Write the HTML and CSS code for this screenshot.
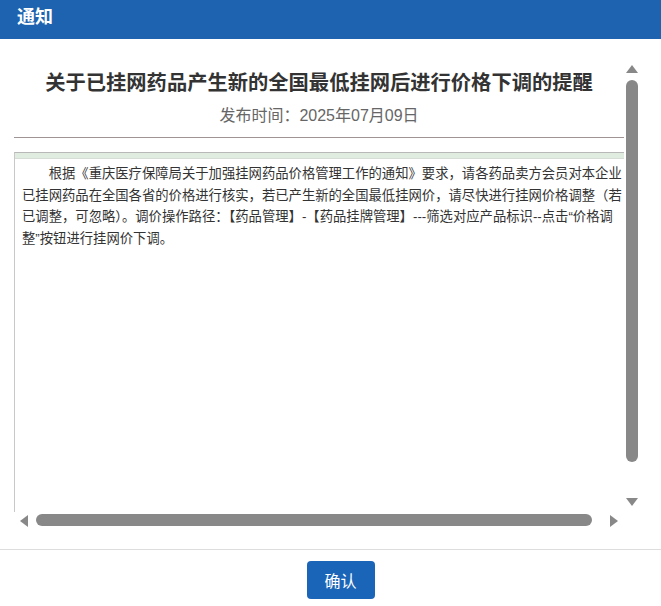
FILE: index.html
```html
<!DOCTYPE html>
<html lang="zh-CN">
<head>
<meta charset="utf-8">
<title>通知</title>
<link rel="stylesheet" href="styles.css">
</head>
<body>
<div class="dialog">
  <div class="dlg-head">通知</div>
  <div class="dlg-body">
    <div class="viewport">
      <div class="content">
        <h1 class="title">关于已挂网药品产生新的全国最低挂网后进行价格下调的提醒</h1>
        <div class="date">发布时间：2025年07月09日</div>
        <hr class="rule">
        <div class="doc">
          <p class="doc-text">根据《重庆医疗保障局关于加强挂网药品价格管理工作的通知》要求，请各药品卖方会员对本企业已挂网药品在全国各省的价格进行核实，若已产生新的全国最低挂网价，请尽快进行挂网价格调整（若已调整，可忽略）。调价操作路径：【药品管理】-【药品挂牌管理】---筛选对应产品标识--点击“价格调整”按钮进行挂网价下调。</p>
        </div>
      </div>
      <div class="vbar">
        <svg class="arrow-v" width="16" height="20" viewBox="0 0 16 20"><polygon points="8,7 14,15 2,15" fill="#888"/></svg>
        <div class="vtrack"><div class="vthumb"></div></div>
        <svg class="arrow-v" width="16" height="20" viewBox="0 0 16 20"><polygon points="2,6 14,6 8,14" fill="#888"/></svg>
      </div>
      <div class="hbar">
        <svg class="arrow-h" width="20" height="16" viewBox="0 0 20 16"><polygon points="6,9 14,3 14,15" fill="#888"/></svg>
        <div class="htrack"><div class="hthumb"></div></div>
        <svg class="arrow-h" width="20" height="16" viewBox="0 0 20 16"><polygon points="6,3 6,15 14,9" fill="#888"/></svg>
      </div>
      <div class="corner"></div>
    </div>
  </div>
  <div class="dlg-foot">
    <button class="btn-ok" type="button">确认</button>
  </div>
</div>
</body>
</html>
```
FILE: styles.css
```css
html, body {
  margin: 0;
  height: 100%;
  background: #fff;
}
body {
  font-family: "Liberation Sans", "Noto Sans CJK SC", sans-serif;
  overflow: hidden;
}
.dialog {
  display: flex;
  flex-direction: column;
  height: 606px;
}
.dlg-head {
  height: 39px;
  flex: none;
  background: #1e63af;
  color: #fff;
  font-weight: bold;
  font-size: 18px;
  line-height: 34px;
  padding-left: 17px;
  box-sizing: border-box;
}
.dlg-body {
  height: 510px;
  flex: none;
  box-sizing: border-box;
  padding: 19px 21px 0 14px;
}
.viewport {
  display: grid;
  grid-template-columns: 610px 16px;
  grid-template-rows: 454px 16px;
  height: 470px;
}
.content {
  overflow: hidden;
  min-width: 0;
}
.title {
  margin: 11px 0 0;
  font-size: 20.3px;
  line-height: 28px;
  text-align: center;
  color: #333;
  font-weight: bold;
  white-space: nowrap;
}
.date {
  margin-top: 7px;
  font-size: 16px;
  line-height: 24px;
  text-align: center;
  color: #666;
}
.rule {
  margin: 9px 0 0;
  border: 0;
  border-top: 1px solid #a09494;
  height: 0;
}
.doc {
  margin-top: 14px;
  width: 100%;
  box-sizing: content-box;
  height: 380px;
  padding: 10px 3px 0 7px;
  border: 1px solid #c8c8c8;
  border-top-color: #b8b8b8;
  background:
    linear-gradient(#d6ddd6, #d6ddd6) 0 5px / 100% 1px no-repeat,
    linear-gradient(#e0ece0, #e0ece0) 0 0 / 100% 5px no-repeat,
    #fff;
}
.doc-text {
  margin: 0 8px 0 0;
  font-size: 10pt;
  line-height: 21.5px;
  text-indent: 2em;
  color: #333;
}

/* drawn scrollbars */
.vbar {
  display: flex;
  flex-direction: column;
  background: #fff;
}
.arrow-v, .arrow-h {
  display: block;
  flex: none;
}
.vtrack {
  flex: 1;
  padding: 2px;
}
.vthumb {
  height: 382px;
  background: #888;
  border-radius: 6px;
}
.hbar {
  display: flex;
  background: #fff;
}
.htrack {
  flex: 1;
  padding: 2px;
}
.hthumb {
  width: 556px;
  height: 12px;
  background: #888;
  border-radius: 6px;
}
.corner {
  background: #fff;
}

.dlg-foot {
  flex: 1;
  border-top: 1px solid #ddd;
  display: flex;
  justify-content: center;
  align-items: flex-start;
  padding: 11px 0 0 20px;
}
.btn-ok {
  width: 68px;
  height: 38px;
  border: 0;
  border-radius: 4px;
  background: #1b65b9;
  color: #fff;
  font-family: inherit;
  font-size: 16px;
  padding: 0;
}
```
